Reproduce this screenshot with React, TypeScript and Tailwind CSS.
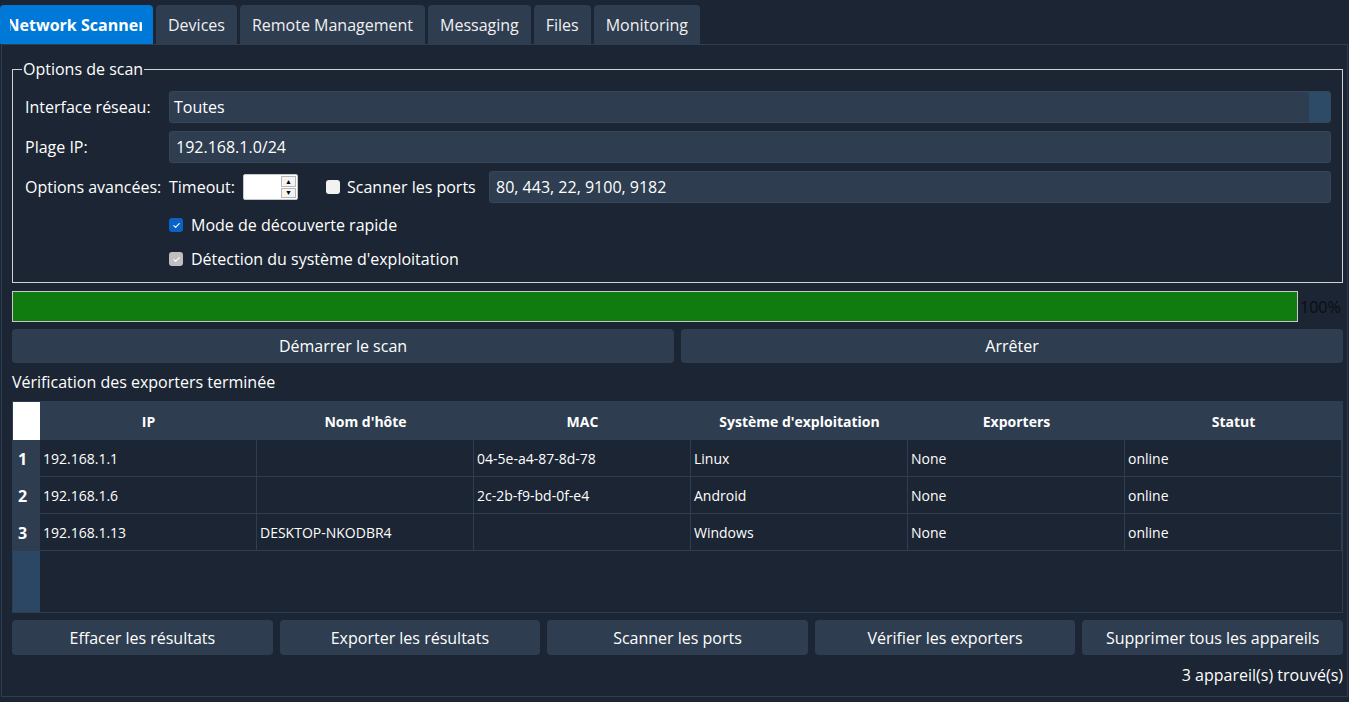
import React from 'react';

const tabs = ['Devices', 'Remote Management', 'Messaging', 'Files', 'Monitoring'];

const columns = ['IP', "Nom d'hôte", 'MAC', "Système d'exploitation", 'Exporters', 'Statut'];

const devices = [
  ['192.168.1.1', '', '04-5e-a4-87-8d-78', 'Linux', 'None', 'online'],
  ['192.168.1.6', '', '2c-2b-f9-bd-0f-e4', 'Android', 'None', 'online'],
  ['192.168.1.13', 'DESKTOP-NKODBR4', '', 'Windows', 'None', 'online'],
];

const bottomActions = [
  'Effacer les résultats',
  'Exporter les résultats',
  'Scanner les ports',
  'Vérifier les exporters',
  'Supprimer tous les appareils',
];

const Check = ({ className }: { className: string }) => (
  <span className={`w-[14px] h-[14px] rounded-[3px] flex items-center justify-center ${className}`}>
    <svg width="9" height="9" viewBox="0 0 10 10" fill="none">
      <path d="M2 5.2l2 2 4-4.4" stroke="white" strokeWidth="1.2" strokeLinecap="round" strokeLinejoin="round" />
    </svg>
  </span>
);

const App: React.FC = () => {
  return (
    <div className="w-[1349px] h-[702px] bg-[#1c2533] text-white overflow-hidden text-[16px]" style={{ fontFamily: '"Open Sans", "Noto Sans", sans-serif' }}>
      {/* Tab bar */}
      <div className="h-[44px] pt-[5px] flex gap-[3px]">
        <div className="w-[153px] h-[39px] bg-[#0078d7] rounded-t-[4px] pl-[10px] pr-[11px] flex items-center">
          <div className="w-full flex justify-center overflow-hidden">
            <span className="shrink-0 whitespace-nowrap font-bold">Network Scanner</span>
          </div>
        </div>
        {tabs.map((t) => (
          <div key={t} className="h-[39px] px-[12px] bg-[#2e3d50] rounded-t-[4px] flex items-center whitespace-nowrap text-[#f0f0f0]">
            {t}
          </div>
        ))}
      </div>

      {/* Main panel */}
      <div className="ml-[1px] w-[1347px] h-[653px] border border-[#2e3d50] pl-[10px] pr-[4px] flex flex-col">
        <fieldset className="mt-[13px] h-[225px] border border-[#d2d2d2] pl-[12px] pr-[11px]">
          <legend className="ml-[-3px] px-[1px] leading-[22px]">Options de scan</legend>
          <div className="flex flex-col pt-[11px]">
            <div className="flex items-center h-[32px]">
              <span className="w-[144px] whitespace-nowrap">Interface réseau:</span>
              <div className="flex-1 h-[32px] rounded-[3px] bg-[#2e3d50] border border-[#354659] flex items-center overflow-hidden">
                <span className="pl-[4px] flex-1">Toutes</span>
                <div className="w-[21px] h-full bg-[#2d4a66]" />
              </div>
            </div>
            <div className="flex items-center h-[32px] mt-[8px]">
              <span className="w-[144px]">Plage IP:</span>
              <div className="flex-1 h-[32px] rounded-[3px] bg-[#2e3d50] border border-[#354659] flex items-center pl-[6px]">
                192.168.1.0/24
              </div>
            </div>
            <div className="flex items-center h-[32px] mt-[8px]">
              <span className="w-[144px] whitespace-nowrap">Options avancées:</span>
              <span className="w-[74px] whitespace-nowrap">Timeout:</span>
              <div className="w-[55px] h-[26px] bg-white border border-[#c8c8c8] rounded-[2px] flex justify-end p-[1px]">
                <div className="w-[15px] flex flex-col gap-[1px]">
                  <div className="flex-1 border border-[#b8b8b8] bg-[#f4f4f4] flex items-center justify-center text-[7px] text-black leading-none">▲</div>
                  <div className="flex-1 border border-[#b8b8b8] bg-[#f4f4f4] flex items-center justify-center text-[7px] text-black leading-none">▼</div>
                </div>
              </div>
              <span className="ml-[28px] w-[14px] h-[14px] rounded-[3px] bg-[#f2f2f2]" />
              <span className="ml-[7px] w-[142px] whitespace-nowrap">Scanner les ports</span>
              <div className="flex-1 h-[32px] rounded-[3px] bg-[#2e3d50] border border-[#354659] flex items-center pl-[6px]">
                80, 443, 22, 9100, 9182
              </div>
            </div>
            <div className="flex items-center h-[24px] mt-[10px] pl-[144px] gap-[8px]">
              <Check className="bg-[#0a62c4]" />
              <span>Mode de découverte rapide</span>
            </div>
            <div className="flex items-center h-[24px] mt-[10px] pl-[144px] gap-[8px]">
              <Check className="bg-[#bfbfbf]" />
              <span>Détection du système d'exploitation</span>
            </div>
          </div>
        </fieldset>

        {/* Progress */}
        <div className="flex items-center mt-[8px] h-[31px]">
          <div className="w-[1286px] h-[31px] border border-[#c8c8c8] bg-[#107c10]" />
          <span className="ml-[2px] text-[16px] text-[#0a0e13]">100%</span>
        </div>

        <div className="flex gap-[7px] mt-[7px]">
          <button className="flex-1 h-[34px] rounded-[4px] bg-[#2e3d50]">Démarrer le scan</button>
          <button className="flex-1 h-[34px] rounded-[4px] bg-[#2e3d50]">Arrêter</button>
        </div>

        <div className="h-[38px] flex items-center">Vérification des exporters terminée</div>

        {/* Device table */}
        <div className="h-[212px] border border-[#2e3d50] flex text-[14px]">
          <div className="w-[27px] shrink-0 flex flex-col bg-[#2e3d50]">
            <div className="h-[38px] bg-white" />
            {devices.map((_, i) => (
              <div key={i} className="h-[37px] flex items-center pl-[5px] font-bold text-[16px]">
                {i + 1}
              </div>
            ))}
            <div className="flex-1 bg-[#2c4763]" />
          </div>
          <div className="flex-1 flex flex-col">
            <div className="h-[38px] flex bg-[#2e3d50] font-bold">
              {columns.map((c) => (
                <div key={c} className="w-[217px] flex items-center justify-center">
                  {c}
                </div>
              ))}
            </div>
            {devices.map((row, i) => (
              <div key={i} className="h-[37px] flex">
                {row.map((cell, j) => (
                  <div key={j} className="w-[217px] border-r border-b border-[#2e3d50] flex items-center pl-[3px]">
                    {cell}
                  </div>
                ))}
              </div>
            ))}
          </div>
        </div>

        <div className="flex gap-[7px] mt-[7px]">
          {bottomActions.map((a) => (
            <button key={a} className="flex-1 h-[35px] rounded-[4px] bg-[#2e3d50] whitespace-nowrap">
              {a}
            </button>
          ))}
        </div>

        <div className="h-[40px] flex items-center justify-end">3 appareil(s) trouvé(s)</div>
      </div>
    </div>
  );
};

export default App;
